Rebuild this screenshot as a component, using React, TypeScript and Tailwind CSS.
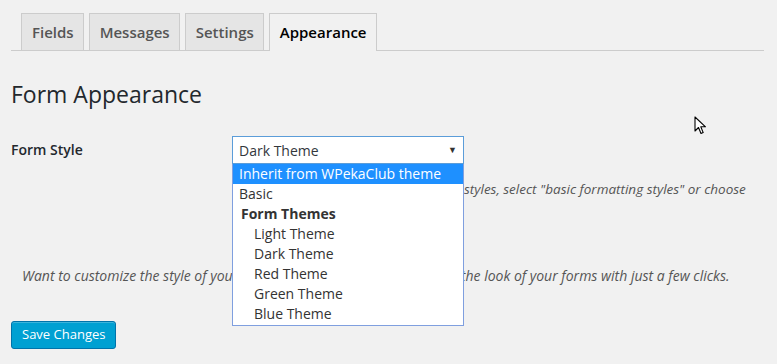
import React from 'react';

const tabs = ['Fields', 'Messages', 'Settings', 'Appearance'];

const options = [
  { label: 'Inherit from WPekaClub theme', kind: 'active' },
  { label: 'Basic', kind: 'plain' },
  { label: 'Form Themes', kind: 'group' },
  { label: 'Light Theme', kind: 'child' },
  { label: 'Dark Theme', kind: 'child' },
  { label: 'Red Theme', kind: 'child' },
  { label: 'Green Theme', kind: 'child' },
  { label: 'Blue Theme', kind: 'child' },
];

const Cursor = () => (
  <svg className="absolute left-[694px] top-[116px]" width="13" height="20" viewBox="0 0 13 20">
    <path d="M1 1 L1 15 L4.5 11.5 L7 17.5 L9.2 16.6 L6.8 10.8 L11.5 10.8 Z" fill="#fff" stroke="#000" strokeWidth="1.1" strokeLinejoin="round" />
  </svg>
);

const App: React.FC = () => {
  return (
    <div className="relative w-[777px] h-[364px] bg-[#f1f1f1] overflow-hidden font-['Open_Sans',sans-serif] text-[#23282d]">
      {/* tab bar */}
      <div className="flex items-end gap-[5px] pt-[13px] pl-[10px] ml-[11px] mr-[13px] border-b border-[#ccc]">
        {tabs.map((t) => {
          const active = t === 'Appearance';
          return (
            <div
              key={t}
              className={
                active
                  ? 'h-[38px] -mb-px pl-[10px] pr-[9px] flex items-center border border-b-0 border-[#ccc] bg-[#f1f1f1] text-black text-[15px] font-semibold'
                  : 'h-[37px] pl-[10px] pr-[9px] flex items-center border border-[#ccc] border-b-0 bg-[#e5e5e5] text-[#555] text-[15px] font-semibold'
              }
            >
              {t}
            </div>
          );
        })}
      </div>

      <div className="px-[11px]">
        <h2 className="mt-[29px] text-[23px] leading-[29px] font-normal">Form Appearance</h2>

        <div className="flex mt-[25px]">
          <div className="w-[221px] pt-[5px] text-[14px] font-semibold">Form Style</div>
          <div className="flex-1">
            <div className="relative w-[232px] mt-[2px]">
              <div className="h-[28px] border border-[#5b9dd9] bg-white flex items-center justify-between pl-[6px] pr-[6px] text-[14px] text-[#32373c]">
                <span>Dark Theme</span>
                <span className="text-[9px] text-[#333]">▼</span>
              </div>
              <div className="absolute left-0 top-full w-full z-10 bg-white border border-t-0 border-[#7f9fdf] pb-px">
                {options.map((o) => (
                  <div
                    key={o.label}
                    className={
                      o.kind === 'active'
                        ? 'h-[20px] leading-[20px] pl-[6px] text-[14px] bg-[#1e90ff] text-white'
                        : o.kind === 'group'
                        ? 'h-[20px] leading-[20px] pl-[8px] text-[14px] font-bold text-[#333]'
                        : o.kind === 'child'
                        ? 'h-[20px] leading-[20px] pl-[21px] text-[14px] text-[#333]'
                        : 'h-[20px] leading-[20px] pl-[6px] text-[14px] text-[#333]'
                    }
                  >
                    {o.label}
                  </div>
                ))}
              </div>
            </div>
            <p className="mt-[15px] text-[13.5px] leading-[20px] italic text-[#555] whitespace-nowrap">
              To use the look of your own site theme styles, select "basic formatting styles" or choose
              <br />
              one of the form themes above.
            </p>
          </div>
        </div>

        <p className="mt-[47px] ml-[11px] text-[14px] leading-[20px] italic text-[#555] whitespace-nowrap">
          Want to customize the style of your forms? Use our style editor to{'\u2009'} alter the look of your forms with just a few clicks.
        </p>

        <button className="mt-[35px] h-[28px] px-[10px] rounded-[3px] bg-[#00a0d2] border border-[#0073aa] text-white text-[13px] shadow-[inset_0_1px_0_rgba(120,200,230,0.5)]">
          Save Changes
        </button>
      </div>

      <Cursor />
    </div>
  );
};

export default App;
